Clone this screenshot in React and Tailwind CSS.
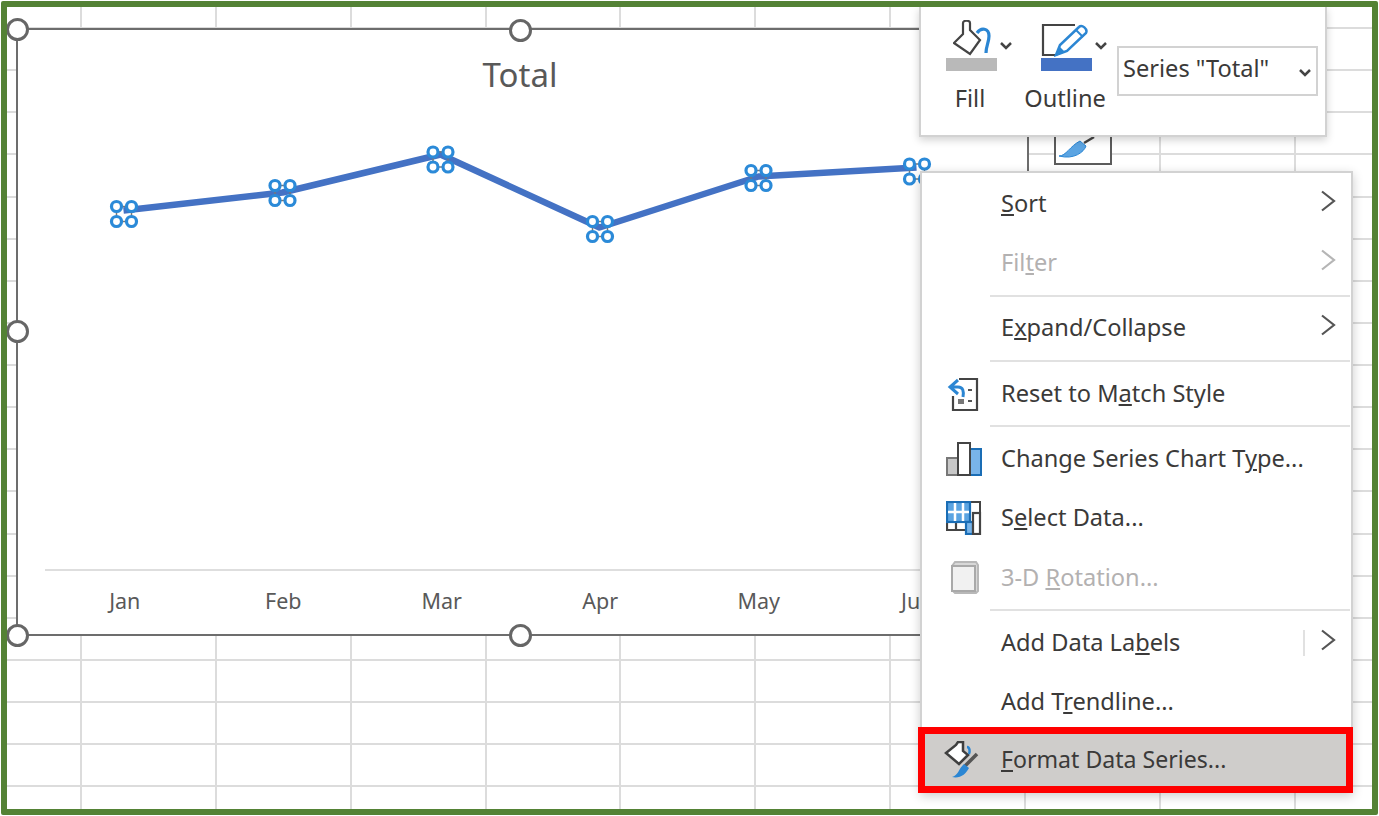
import React from "react";

const points = [
  { x: 124, y: 211, hx: 124.5, hy: 214.5 },
  { x: 283, y: 193, hx: 283, hy: 193.5 },
  { x: 441, y: 155, hx: 441, hy: 160 },
  { x: 600, y: 228, hx: 600.5, hy: 229.5 },
  { x: 759, y: 177, hx: 759, hy: 178.5 },
  { x: 917, y: 168, hx: 917.5, hy: 172 },
];

const months = ["Jan", "Feb", "Mar", "Apr", "May", "Jun"];

function Handle({ className }) {
  return <div className={`absolute h-[23px] w-[23px] rounded-full border-[3px] border-[#666666] bg-white ${className}`} />;
}

function Sep() {
  return <div className="ml-[68px] mr-px my-[2px] h-[2px] bg-[#e1e1e1]" />;
}

function Chevron({ light }) {
  return (
    <svg width="16" height="24" viewBox="0 0 16 24" fill="none" stroke={light ? "#b5b5b5" : "#555"} strokeWidth="2.2">
      <path d="M2 2.500 L14 12 L2 21.500" />
    </svg>
  );
}

function Row({ icon, children, arrow, disabled, divider }) {
  return (
    <div className="relative flex h-[59.3px] items-center">
      <div className="flex w-[79px] shrink-0 items-center justify-center pl-[5px]">{icon}</div>
      <div className={`text-[23.6px] leading-none ${disabled ? "text-[#b3b1b1]" : "text-[#3b3a39]"}`}>{children}</div>
      {divider && <div className="ml-auto mr-[15px] h-[26px] w-[2px] bg-[#e1e1e1]" />}
      {arrow && (
        <div className={`${divider ? "mr-[15px]" : "ml-auto mr-[15px]"} -mt-[6px]`}>
          <Chevron light={disabled} />
        </div>
      )}
    </div>
  );
}

function ResetIcon() {
  return (
    <svg width="34" height="36" viewBox="0 0 34 36" fill="none">
      <path d="M12 3 H30 V34 H6 V20" stroke="#444" strokeWidth="2.200" />
      <path d="M11 4 L3 11 L11 18 M4 11 H11 C16 11 17 15 16 21" stroke="#2b86d3" strokeWidth="3" />
      <path d="M21 14 h4 M21 25 h4" stroke="#555" strokeWidth="2.200" />
      <rect x="11" y="23" width="6" height="5" fill="#777" />
    </svg>
  );
}

function ChartTypeIcon() {
  return (
    <svg width="36" height="36" viewBox="0 0 36 36" fill="none">
      <rect x="1" y="17" width="11" height="17" fill="#c8c8c8" stroke="#777" strokeWidth="2" />
      <rect x="24" y="8" width="11" height="26" fill="#79b4e9" stroke="#1a6db5" strokeWidth="2" />
      <rect x="12" y="2" width="12" height="32" fill="#fff" stroke="#444" strokeWidth="2" />
    </svg>
  );
}

function SelectDataIcon() {
  return (
    <svg width="36" height="34" viewBox="0 0 36 34" fill="none">
      <path d="M24 1 H34 V15" stroke="#444" strokeWidth="2" />
      <path d="M1 20 V29 H20 M10 20 V29" stroke="#444" strokeWidth="2.200" />
      <rect x="1" y="1" width="23" height="20" fill="#5ba4e2" stroke="#1a6db5" strokeWidth="2.200" />
      <path d="M9 2 V20 M17 2 V20 M2 11 H23" stroke="#fff" strokeWidth="2.500" />
      <rect x="20" y="21" width="7" height="12" fill="#79b4e9" stroke="#1a6db5" strokeWidth="2.200" />
      <rect x="27" y="12" width="7" height="21" fill="#fff" stroke="#444" strokeWidth="2.200" />
    </svg>
  );
}

function RotationIcon() {
  return (
    <svg width="30" height="34" viewBox="0 0 30 34" fill="none">
      <path d="M3 6 L6 2 H27 L29 5 V31 L27 33 H6 L3 30 Z" fill="#d8d8d8" stroke="#b8b8b8" strokeWidth="2" />
      <rect x="3" y="6" width="23" height="25" fill="#f1f1f1" stroke="#a9a9a9" strokeWidth="2" />
    </svg>
  );
}

function FormatIcon() {
  return (
    <svg width="38" height="38" viewBox="0 0 38 38" fill="none">
      <path d="M2 12 L12 4 L14 1 H19 V10 L24 14 L15 23 Z" fill="#fff" stroke="#3f3f3f" strokeWidth="2.500" />
      <path d="M23 6 C26 6 26 11 25 13" stroke="#2b86d3" strokeWidth="2.500" />
      <path d="M21 25 L33 13" stroke="#555" strokeWidth="3.500" />
      <path d="M8 36 C14 35 15 27 20 23 L25 27 C22 33 16 38 8 36 Z" fill="#2b86d3" />
    </svg>
  );
}

function FillIcon() {
  return (
    <svg width="42" height="36" viewBox="0 0 42 36" fill="none">
      <path d="M1 23 L10 14 V3 C10 0 17 0 17 3 V10 L27 20 L17 34 Z" fill="#fff" stroke="#444" strokeWidth="2.200" />
      <path d="M24 13 C28 7 36 8 36 16 C36 22 33 26 33 33" stroke="#2b86d3" strokeWidth="3.200" />
    </svg>
  );
}

function OutlineIcon() {
  return (
    <svg width="50" height="33" viewBox="0 0 50 33" fill="none">
      <path d="M34 1 H2 V31 H14" stroke="#444" strokeWidth="2.200" />
      <path d="M15 31 L19 21 L38 3 C41 0 47 5 45 9 L26 27 Z" fill="#fff" stroke="#2b86d3" strokeWidth="2.500" />
      <path d="M15 32 L19 23 L24 28 Z" fill="#2b86d3" />
      <path d="M35 6 L42 13" stroke="#2b86d3" strokeWidth="2" />
    </svg>
  );
}

function SmallChevron() {
  return (
    <svg width="12" height="8" viewBox="0 0 12 8" fill="none" stroke="#444" strokeWidth="2.500">
      <path d="M1 1 L6 6 L11 1" />
    </svg>
  );
}

export default function App() {
  const linePoints = points.map((p) => `${p.x - 18.5},${p.y - 30.5}`).join(" ");
  const cols = Array.from({ length: 220 });
  return (
    <div className="h-[816px] w-[1379px] overflow-hidden bg-white p-px font-['Noto_Sans','Open_Sans',sans-serif]">
      <div className="relative h-[814px] w-[1377px] overflow-hidden rounded-[2px] border-[6px] border-[#548235] bg-white">
        {/* worksheet cells */}
        <div className="grid grid-cols-[75px_135px_135px_135px_134px_135px_135px_135px_135px_135px_135px] grid-rows-[22px_repeat(19,42.14px)]">
          {cols.map((_, i) => (
            <div key={i} className="border-b-2 border-r-2 border-[#dcdcdc]" />
          ))}
        </div>

        {/* chart object */}
        <div className="absolute left-[9px] top-[21px] h-[608px] w-[1013px] border-[2.500px] border-[#6d6d6d] bg-white">
          <div className="pr-[5px] pt-[22px] text-center text-[33px] leading-[46px] text-[#595959]">Total</div>
          <svg className="absolute left-0 top-0" width="1010" height="300" viewBox="0 0 1010 300" fill="none">
            <polyline points={linePoints} stroke="#4472c4" strokeWidth="6.500" strokeLinejoin="round" />
            {points.map((p, i) => {
              const cx = p.hx - 18.5;
              const cy = p.hy - 30.5;
              return (
                <g key={i}>
                  <rect x={cx - 7.500} y={cy - 7.500} width="15" height="15" stroke="#777" strokeWidth="1.500" />
                  {[[-7.500, -7.500], [7.500, -7.500], [-7.500, 7.500], [7.500, 7.500]].map(([dx, dy], j) => (
                    <circle key={j} cx={cx + dx} cy={cy + dy} r="5" fill="#fff" stroke="#2b8ad8" strokeWidth="3.200" />
                  ))}
                </g>
              );
            })}
          </svg>
          <div className="absolute bottom-[63px] left-[27px] right-0 h-[2px] bg-[#dedede]" />
          <div className="absolute bottom-[19px] left-[27px] right-0 flex pl-[0.5px]">
            {months.map((m) => (
              <div key={m} className="w-[158.500px] text-center text-[21.5px] leading-[28px] text-[#595959]">
                {m}
              </div>
            ))}
          </div>
        </div>

        <Handle className="left-[-1.500px] top-[10.500px]" />
        <Handle className="left-[502px] top-[11.500px]" />
        <Handle className="left-[-1.500px] top-[312.500px]" />
        <Handle className="left-[-1.500px] top-[616.500px]" />
        <Handle className="left-[502px] top-[616.500px]" />

        {/* brush button peeking below the toolbar */}
        <div className="absolute left-[1047px] top-[120px] flex h-[38px] w-[58px] items-end justify-start border-2 border-t-0 border-[#5c5c5c] bg-white pb-px pl-[2px]">
          <svg width="38" height="28" viewBox="0 0 38 28" fill="none">
            <path d="M26 9 L36 3" stroke="#444" strokeWidth="2.500" />
            <path d="M1 22 C8 22 12 12 22 7 L28 12 C26 18 16 26 1 22 Z" fill="#5ba4e2" stroke="#2b86d3" strokeWidth="1" />
          </svg>
        </div>

        {/* mini toolbar */}
        <div className="absolute left-[912px] top-0 flex h-[130px] w-[408px] border-2 border-t-0 border-[#d2d2d2] bg-white shadow-[0_3px_8px_rgba(0,0,0,0.18)]">
          <div className="ml-[25px] mt-[13px] flex w-[70px] shrink-0 flex-col">
            <div className="flex items-start pl-[7px]">
              <FillIcon />
              <div className="ml-[5px] mt-[22px]"><SmallChevron /></div>
            </div>
            <div className="mt-[2px] h-[13px] w-[51px] bg-[#b9b9b9]" />
            <div className="mt-[12px] w-[48px] text-center text-[23.6px] leading-[30px] text-[#3b3a39]">Fill</div>
          </div>
          <div className="ml-[23px] mt-[17px] flex w-[78px] shrink-0 flex-col">
            <div className="flex items-start">
              <div className="ml-[2px]"><OutlineIcon /></div>
              <div className="ml-[4px] mt-[18px]"><SmallChevron /></div>
            </div>
            <div className="ml-[2px] mt-[1px] h-[13px] w-[51px] bg-[#4472c4]" />
            <div className="-ml-[15px] mt-[12px] w-[82px] whitespace-nowrap text-center text-[23.6px] leading-[30px] text-[#3b3a39]">Outline</div>
          </div>
          <div className="mt-[39px] flex h-[50px] w-[201px] shrink-0 items-center border-2 border-[#d2d2d2] pl-[4px] pr-[5px]">
            <span className="mb-[5px] whitespace-nowrap text-[23.6px] leading-none text-[#3b3a39]">Series "Total"</span>
            <span className="ml-auto mt-[4px]"><SmallChevron /></span>
          </div>
        </div>

        {/* context menu */}
        <div className="absolute left-[913px] top-[164px] w-[433px] border-2 border-[#d2d2d2] bg-white pt-[1px] shadow-[0_3px_10px_rgba(0,0,0,0.2)]">
          <Row arrow><u>S</u>ort</Row>
          <Row arrow disabled>Fil<u>t</u>er</Row>
          <Sep />
          <Row arrow>E<u>x</u>pand/Collapse</Row>
          <Sep />
          <Row icon={<ResetIcon />}>Reset to M<u>a</u>tch Style</Row>
          <Sep />
          <Row icon={<ChartTypeIcon />}>Change Series Chart T<u>y</u>pe...</Row>
          <Row icon={<SelectDataIcon />}>S<u>e</u>lect Data...</Row>
          <Row icon={<RotationIcon />} disabled>3-D <u>R</u>otation...</Row>
          <Sep />
          <Row arrow divider>Add Data La<u>b</u>els</Row>
          <Row>Add T<u>r</u>endline...</Row>
          <div className="h-[59px]" />
        </div>

        {/* highlighted item */}
        <div className="absolute left-[911px] top-[720px] flex h-[66px] w-[435px] items-center border-[7px] border-[#ff0000] bg-[#cfcdcb]">
          <div className="flex w-[76px] shrink-0 items-center justify-center"><FormatIcon /></div>
          <div className="text-[23.1px] leading-none text-[#3b3a39]"><u>F</u>ormat Data Series...</div>
        </div>
      </div>
    </div>
  );
}
